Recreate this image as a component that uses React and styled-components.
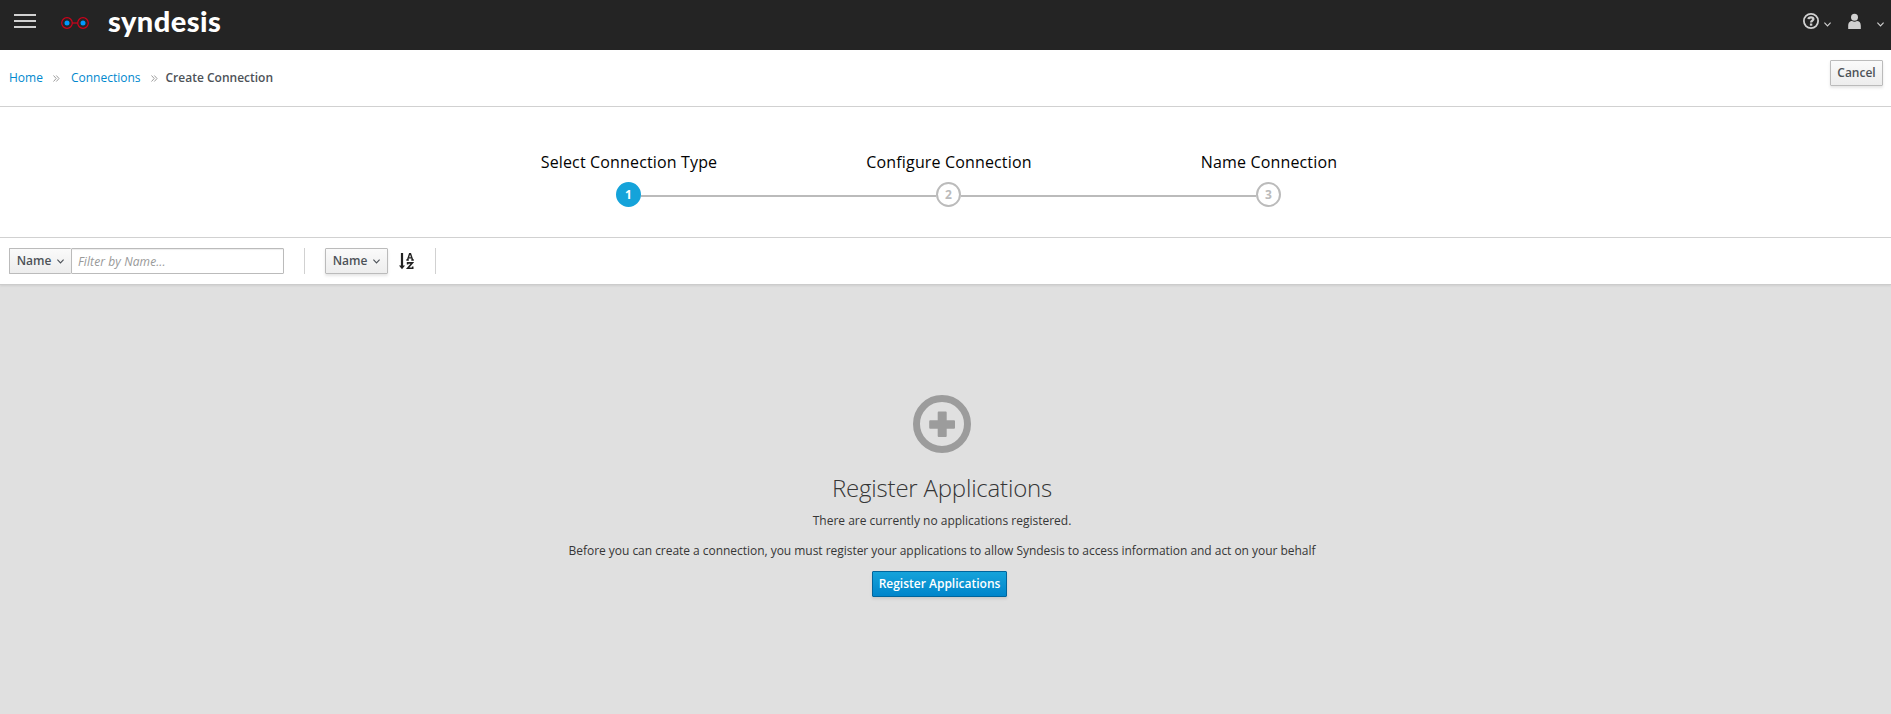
import React from 'react';
import styled, { createGlobalStyle, css } from 'styled-components';

const Global = createGlobalStyle`
  * { box-sizing: border-box; }
  body {
    margin: 0;
    background: #e0e0e0;
    color: #363636;
    font-family: "Open Sans", Helvetica, Arial, sans-serif;
    font-size: 12px;
    line-height: 20px;
  }
  button, input { font-family: inherit; }
`;

const Page = styled.div`
  display: flex;
  flex-direction: column;
  height: 714px;
  overflow: hidden;
`;

const Masthead = styled.header`
  display: flex;
  align-items: flex-start;
  flex: none;
  height: 50px;
  background: #242424;
`;

const MenuToggle = styled.div`
  display: flex;
  flex-direction: column;
  gap: 4px;
  width: 22px;
  margin: 14px 0 0 14px;
`;

const MenuBar = styled.span`
  height: 2px;
  background: #d1d1d1;
`;

const Glasses = styled.svg`
  margin: 17px 0 0 25px;
  flex: none;
`;

const Brand = styled.span`
  margin: 1px 0 0 19px;
  color: #fff;
  font-family: Lato, sans-serif;
  font-weight: 900;
  font-size: 29px;
  line-height: 40px;
  letter-spacing: 0.45px;
`;

const Utilities = styled.div`
  display: flex;
  margin-left: auto;
  padding: 13px 7px 0 0;
`;

const Utility = styled.div`
  display: flex;
  gap: ${(p) => p.$gap}px;
  margin-left: ${(p) => p.$offset || 0}px;
`;

const Caret = styled.svg`
  flex: none;
  margin-top: ${(p) => p.$top || 0}px;
`;

const BreadcrumbBar = styled.nav`
  display: flex;
  justify-content: space-between;
  flex: none;
  height: 57px;
  padding: 10px 8px 0 9px;
  background: #fff;
  border-bottom: 1px solid #d1d1d1;
`;

const Breadcrumb = styled.ol`
  display: flex;
  list-style: none;
  margin: 0;
  padding: 8px 0 0;
`;

const Crumb = styled.li`
  display: flex;
  color: #4d5258;
  font-weight: ${(p) => (p.$current ? 600 : 400)};
`;

const CrumbLink = styled.a`
  color: #0088ce;
`;

const CrumbArrow = styled.svg`
  margin: 7px ${(p) => p.$after}px 0 10px;
`;

const buttonFace = css`
  border: 1px solid #bbb;
  border-radius: 1px;
  background: linear-gradient(#fafafa, #ededed);
  color: #4d5258;
  box-shadow: 0 2px 3px rgba(3, 3, 3, 0.1);
`;

const primaryFace = css`
  border: 1px solid #00659c;
  border-radius: 1px;
  background: linear-gradient(#15a3da, #0085cb);
  color: #fff;
  box-shadow: 0 2px 3px rgba(3, 3, 3, 0.1);
`;

const Button = styled.button`
  ${(p) => (p.$primary ? primaryFace : buttonFace)}
  display: flex;
  align-items: center;
  justify-content: center;
  gap: 6px;
  width: ${(p) => p.$width}px;
  height: 26px;
  padding: 0;
  font-size: 12px;
  font-weight: 600;
  line-height: 20px;
  white-space: nowrap;
  ${(p) => p.$attached && css`
    border-right: 0;
    box-shadow: none;
  `}
`;

const Wizard = styled.section`
  flex: none;
  height: 131px;
  padding-top: 43px;
  background: #fff;
  border-bottom: 1px solid #d1d1d1;
`;

const Steps = styled.ol`
  display: flex;
  list-style: none;
  width: 960px;
  margin: 0 0 0 468.5px;
  padding: 0;
`;

const Step = styled.li`
  display: flex;
  flex-direction: column;
  align-items: center;
  width: 320px;
`;

const StepTitle = styled.span`
  padding-left: 1px;
  color: #030303;
  font-size: 16px;
  line-height: 24px;
  letter-spacing: 0.15px;
`;

const StepTrack = styled.div`
  display: flex;
  align-items: center;
  width: 100%;
  margin-top: 8px;
`;

const StepLine = styled.span`
  flex: 1;
  height: 2px;
  margin-top: 3px;
  background: ${(p) => (p.$hidden ? 'transparent' : '#bbb')};
`;

const StepNumber = styled.span`
  width: 25px;
  height: 25px;
  border: 2px solid ${(p) => (p.$active ? '#15a3da' : '#bbb')};
  border-radius: 50%;
  background: ${(p) => (p.$active ? '#15a3da' : '#fff')};
  color: ${(p) => (p.$active ? '#fff' : '#bbb')};
  font-size: 12px;
  font-weight: 700;
  line-height: 21px;
  text-align: center;
`;

const Toolbar = styled.div`
  display: flex;
  flex: none;
  height: 46px;
  padding: 10px 9px 0;
  background: #fff;
  box-shadow: 0 1px 0 #ccc, 0 2px 2px rgba(0, 0, 0, 0.08);
  position: relative;
`;

const FilterInput = styled.input`
  width: 213px;
  height: 26px;
  padding: 1px 6px 0;
  border: 1px solid #bbb;
  border-radius: 1px;
  background: #fff;
  box-shadow: inset 0 1px 1px rgba(3, 3, 3, 0.075);
  font-size: 12px;
  letter-spacing: 0.1px;
  &::placeholder {
    color: #999;
    opacity: 1;
    font-style: italic;
  }
`;

const Divider = styled.span`
  width: 1px;
  height: 26px;
  margin: 0 20px;
  background: #d1d1d1;
`;

const SortIcon = styled.svg`
  flex: none;
  margin: 5px 1px 0 11px;
`;

const EmptyState = styled.main`
  display: flex;
  flex-direction: column;
  align-items: center;
  flex: 1;
  padding: 111px 7px 0 0;
`;

const EmptyTitle = styled.h1`
  margin: 18px 0 0;
  font-size: 24px;
  font-weight: 300;
  line-height: 34px;
  letter-spacing: -0.2px;
`;

const EmptyText = styled.p`
  margin: ${(p) => p.$top}px 0 0;
  letter-spacing: ${(p) => p.$tracking || 0}px;
`;

const EmptyAction = styled.div`
  margin: 10px 5px 0 0;
`;

function Chevron({ color = '#4d5258', top }) {
  return (
    <Caret $top={top} width="7" height="5" viewBox="0 0 7 5" fill="none" stroke={color} strokeWidth="1.1">
      <path d="M.4.7 3.5 3.9 6.6.7" />
    </Caret>
  );
}

function Separator({ after }) {
  return (
    <CrumbArrow $after={after} width="7" height="7" viewBox="0 0 7 7" fill="none" stroke="#9c9c9c" strokeWidth="1">
      <path d="M.5.5l2.700 3-2.700 3M3.300.5l2.700 3-2.700 3" />
    </CrumbArrow>
  );
}

const steps = ['Select Connection Type', 'Configure Connection', 'Name Connection'];

export default function App() {
  return (
    <Page>
      <Global />
      <Masthead>
        <MenuToggle><MenuBar /><MenuBar /><MenuBar /></MenuToggle>
        <Glasses width="28" height="13" viewBox="0 0 28 13" fill="none" stroke="#d0021b" strokeWidth="1.200">
          <circle cx="6" cy="6" r="5.300" />
          <circle cx="22" cy="6" r="5.300" />
          <path d="M11.300 6h5.400" />
          <circle cx="6" cy="6" r="2.500" fill="#0099ff" stroke="none" />
          <circle cx="22" cy="6" r="2.500" fill="#0099ff" stroke="none" />
        </Glasses>
        <Brand>syndesis</Brand>
        <Utilities>
          <Utility $gap={5}>
            <svg width="16" height="16" viewBox="0 0 16 16" fill="none" stroke="#d1d1d1">
              <circle cx="8" cy="8" r="7.100" strokeWidth="1.800" />
              <path d="M5.500 6.200C5.700 3.900 10.400 3.800 10.400 6.100 10.400 7.600 8.100 7.700 8.100 9.500" strokeWidth="2.300" />
              <path d="M6.900 10.500h2.400v2.200H6.900z" fill="#d1d1d1" stroke="none" />
            </svg>
            <Chevron color="#d1d1d1" top={9} />
          </Utility>
          <Utility $gap={16} $offset={17}>
            <svg width="13" height="16" viewBox="0 0 13 16" fill="#d1d1d1">
              <circle cx="6.500" cy="4.200" r="3.500" />
              <path d="M.2 15.900v-3C.2 9.400 2 8 4 8c1.500 1 3.500 1 5 0 2 0 3.800 1.400 3.800 4.700v3.200z" />
            </svg>
            <Chevron color="#d1d1d1" top={9} />
          </Utility>
        </Utilities>
      </Masthead>
      <BreadcrumbBar>
        <Breadcrumb>
          <Crumb><CrumbLink>Home</CrumbLink><Separator after={11} /></Crumb>
          <Crumb><CrumbLink>Connections</CrumbLink><Separator after={8} /></Crumb>
          <Crumb $current>Create Connection</Crumb>
        </Breadcrumb>
        <Button $width={53}>Cancel</Button>
      </BreadcrumbBar>
      <Wizard>
        <Steps>
          {steps.map((title, i) => (
            <Step key={title}>
              <StepTitle>{title}</StepTitle>
              <StepTrack>
                <StepLine $hidden={i === 0} />
                <StepNumber $active={i === 0}>{i + 1}</StepNumber>
                <StepLine $hidden={i === steps.length - 1} />
              </StepTrack>
            </Step>
          ))}
        </Steps>
      </Wizard>
      <Toolbar>
        <Button $attached $width={62}>Name<Chevron /></Button>
        <FilterInput placeholder="Filter by Name..." />
        <Divider />
        <Button $width={63}>Name<Chevron /></Button>
        <SortIcon width="15" height="17" viewBox="0 0 15 17" fill="none" stroke="#222">
          <path d="M3 0v14" strokeWidth="2.200" />
          <path d="M0 12.500h6l-3 3.700z" fill="#222" stroke="none" />
          <path d="M8.500 7 10.600.7h.9L13.600 7M9.200 4.900h3.700M7.300 7h2.500M12.300 7h2.500" strokeWidth="1.400" />
          <path d="M8.600 11.400V9.900h4.800l-4.700 5.400h5v-1.700" strokeWidth="1.600" />
        </SortIcon>
        <Divider />
      </Toolbar>
      <EmptyState>
        <svg width="58" height="58" viewBox="0 0 58 58">
          <circle cx="29" cy="29" r="25.500" fill="none" stroke="#9c9c9c" strokeWidth="7" />
          <path d="M25.700 16.500h7q1 0 1 1v7.700h7.300q1 0 1 1v6.500q0 1-1 1h-7.300V41q0 1-1 1h-7q-1 0-1-1v-7.300h-7.500q-1 0-1-1v-6.500q0-1 1-1h7.500v-7.700q0-1 1-1z" fill="#9c9c9c" />
        </svg>
        <EmptyTitle>Register Applications</EmptyTitle>
        <EmptyText $top={6}>There are currently no applications registered.</EmptyText>
        <EmptyText $top={10} $tracking={-0.035}>Before you can create a connection, you must register your applications to allow Syndesis to access information and act on your behalf</EmptyText>
        <EmptyAction><Button $primary $width={135}>Register Applications</Button></EmptyAction>
      </EmptyState>
    </Page>
  );
}
